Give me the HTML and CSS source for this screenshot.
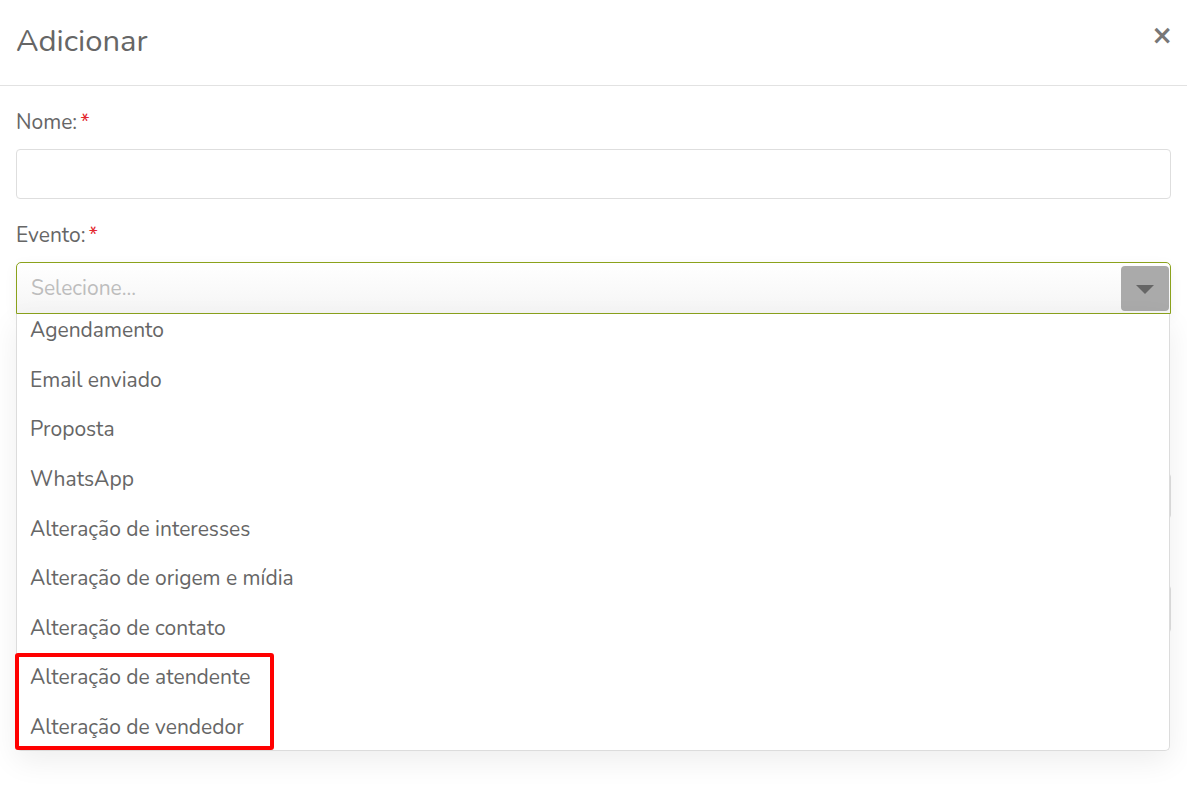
FILE: index.html
```html
<!DOCTYPE html>
<html lang="pt-BR">
<head>
    <meta charset="UTF-8">
    <title>Adicionar</title>
    <link rel="stylesheet" href="styles.css">
</head>
<body>
    <div class="modal">
        <div class="modal-header">
            <h2>Adicionar</h2>
            <span class="close">&times;</span>
        </div>
        <div class="modal-body">
            <div class="form-group">
                <label>Nome:<span class="req">*</span></label>
                <input type="text" class="field">
            </div>
            <div class="form-group select-group">
                <label>Evento:<span class="req">*</span></label>
                <div class="select-box">
                    <span class="placeholder">Selecione...</span>
                    <span class="select-btn"><span class="caret"></span></span>
                </div>
                <!-- lista aberta -->
                <div class="dropdown">
                    <div class="dropdown-inner">
                        <ul>
                            <li>Agendamento</li>
                            <li>Email enviado</li>
                            <li>Proposta</li>
                            <li>WhatsApp</li>
                            <li>Alteração de interesses</li>
                            <li>Alteração de origem e mídia</li>
                            <li>Alteração de contato</li>
                            <li>Alteração de atendente</li>
                            <li>Alteração de vendedor</li>
                        </ul>
                    </div>
                    <div class="highlight-box"></div>
                </div>
            </div>
            <!-- campos escondidos atrás da lista -->
            <input type="text" class="field behind first">
            <input type="text" class="field behind second">
        </div>
    </div>
</body>
</html>
```

FILE: styles.css
```css
html, body {
    height: 100%;
}

body {
    margin: 0;
    background: #fff;
    font-family: "Nunito", "Lato", "Open Sans", sans-serif;
    color: #666;
    overflow: hidden;
}

.modal {
    min-height: 792px;
}

.modal-header {
    height: 85px;
    border-bottom: 1px solid #e2e2e2;
    padding: 0 16px;
    display: flex;
    align-items: center;
    justify-content: space-between;
}

.modal-header h2 {
    margin: 0;
    font-size: 31px;
    font-weight: 400;
    color: #666;
    padding-bottom: 4px;
}

.close {
    font-family: "DejaVu Sans", sans-serif;
    font-size: 26px;
    font-weight: bold;
    color: #777;
    margin-right: -2px;
    margin-bottom: 16px;
}

.modal-body {
    padding: 23px 16px 0 16px;
}

.form-group {
    margin-bottom: 23px;
}

label {
    display: block;
    font-size: 21px;
    line-height: 27px;
    margin-bottom: 13px;
}

.req {
    color: #e3262d;
    margin-left: 3px;
}

.field {
    display: block;
    box-sizing: border-box;
    width: 100%;
    height: 50px;
    border: 1px solid #dedede;
    border-radius: 4px;
    background: #fff;
}

.select-group {
    position: relative;
}

.select-box {
    box-sizing: border-box;
    height: 52px;
    border: 1px solid #8ba21c;
    border-radius: 5px 5px 0 0;
    background: linear-gradient(#fff, #f5f5f5);
    display: flex;
    align-items: center;
    justify-content: space-between;
    padding: 0 1px 0 14px;
    box-shadow: 0 4px 14px rgba(0, 0, 0, 0.05);
}

.placeholder {
    font-size: 21px;
    color: #bdbdbd;
}

.select-btn {
    width: 48px;
    height: 45px;
    background: #aaa;
    border-radius: 4px;
    display: flex;
    align-items: center;
    justify-content: center;
}

.caret {
    width: 0;
    height: 0;
    border-left: 9px solid transparent;
    border-right: 9px solid transparent;
    border-top: 9px solid #666;
    margin-top: 3px;
}

.dropdown {
    position: absolute;
    left: 0;
    right: 1px;
    top: 92px;
    height: 437px;
    box-sizing: border-box;
    background: #fff;
    border: 1px solid #dcdcdc;
    border-top: none;
    border-radius: 0 0 5px 5px;
    z-index: 5;
    box-shadow: 0 10px 30px rgba(0, 0, 0, 0.07);
}

.dropdown-inner {
    height: 100%;
    overflow: hidden;
}

.dropdown ul {
    list-style: none;
    margin: -8px 0 0 0;
    padding: 0;
}

.dropdown li {
    font-size: 21px;
    line-height: 25px;
    padding: 12.3px 13px;
    color: #666;
}

.highlight-box {
    position: absolute;
    left: -2px;
    top: 339px;
    width: 259px;
    height: 97px;
    box-sizing: border-box;
    border: 4px solid #f00;
    border-radius: 3px;
}

.behind.first {
    margin-top: 159px;
    height: 46px;
}

.behind.second {
    margin-top: 66px;
    height: 48px;
}
```
